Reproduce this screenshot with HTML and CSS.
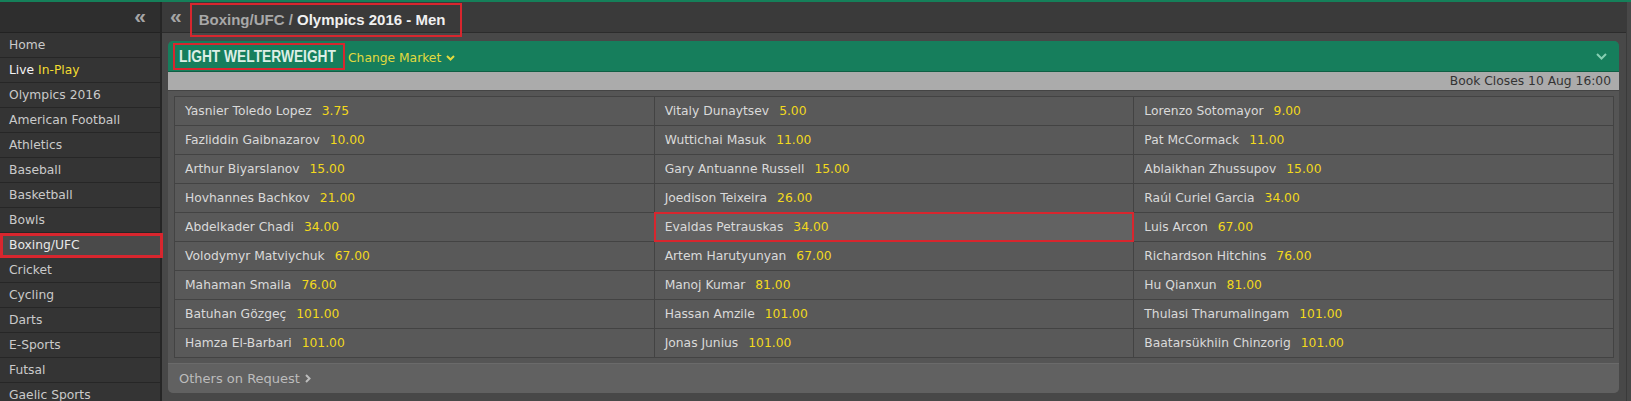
FILE: index.html
```html
<!DOCTYPE html>
<html>
<head>
<meta charset="utf-8">
<title>Boxing/UFC - Olympics 2016 - Men</title>
<link rel="stylesheet" href="styles.css">
</head>
<body>
<div id="page">
    <!-- Sports menu -->
    <div id="sidebar">
        <div class="side-head"><span class="collapse">&laquo;</span></div>
        <ul class="sports">
            <li>Home</li>
            <li class="live">Live <span>In-Play</span></li>
            <li>Olympics 2016</li>
            <li>American Football</li>
            <li>Athletics</li>
            <li>Baseball</li>
            <li>Basketball</li>
            <li>Bowls</li>
            <li class="current">Boxing/UFC</li>
            <li>Cricket</li>
            <li>Cycling</li>
            <li>Darts</li>
            <li>E-Sports</li>
            <li>Futsal</li>
            <li>Gaelic Sports</li>
        </ul>
    </div>

    <div id="main">
        <div class="crumbs">
            <span class="collapse">&laquo;</span>
            <h1 class="marked">Boxing/UFC / <b>Olympics 2016 - Men</b></h1>
        </div>

        <div class="market">
            <div class="market-head">
                <h2 class="marked"><span>LIGHT WELTERWEIGHT</span></h2>
                <span class="change">Change Market
                    <svg width="9" height="6" viewBox="0 0 9 6"><path d="M1 1l3.5 3.5L8 1" fill="none" stroke="currentColor" stroke-width="2"/></svg>
                </span>
                <svg class="toggle" width="11" height="7" viewBox="0 0 11 7"><path d="M1 1l4.5 4.5L10 1" fill="none" stroke="currentColor" stroke-width="2"/></svg>
            </div>
            <div class="closes">Book Closes 10 Aug 16:00</div>

            <div class="market-body">
                <div class="runners">
                    <div class="runner">Yasnier Toledo Lopez<span>3.75</span></div>
                    <div class="runner">Vitaly Dunaytsev<span>5.00</span></div>
                    <div class="runner">Lorenzo Sotomayor<span>9.00</span></div>
                    <div class="runner">Fazliddin Gaibnazarov<span>10.00</span></div>
                    <div class="runner">Wuttichai Masuk<span>11.00</span></div>
                    <div class="runner">Pat McCormack<span>11.00</span></div>
                    <div class="runner">Arthur Biyarslanov<span>15.00</span></div>
                    <div class="runner">Gary Antuanne Russell<span>15.00</span></div>
                    <div class="runner">Ablaikhan Zhussupov<span>15.00</span></div>
                    <div class="runner">Hovhannes Bachkov<span>21.00</span></div>
                    <div class="runner">Joedison Teixeira<span>26.00</span></div>
                    <div class="runner">Raúl Curiel Garcia<span>34.00</span></div>
                    <div class="runner">Abdelkader Chadi<span>34.00</span></div>
                    <div class="runner picked">Evaldas Petrauskas<span>34.00</span></div>
                    <div class="runner">Luis Arcon<span>67.00</span></div>
                    <div class="runner">Volodymyr Matviychuk<span>67.00</span></div>
                    <div class="runner">Artem Harutyunyan<span>67.00</span></div>
                    <div class="runner">Richardson Hitchins<span>76.00</span></div>
                    <div class="runner">Mahaman Smaila<span>76.00</span></div>
                    <div class="runner">Manoj Kumar<span>81.00</span></div>
                    <div class="runner">Hu Qianxun<span>81.00</span></div>
                    <div class="runner">Batuhan Gözgeç<span>101.00</span></div>
                    <div class="runner">Hassan Amzile<span>101.00</span></div>
                    <div class="runner">Thulasi Tharumalingam<span>101.00</span></div>
                    <div class="runner">Hamza El-Barbari<span>101.00</span></div>
                    <div class="runner">Jonas Junius<span>101.00</span></div>
                    <div class="runner">Baatarsükhiin Chinzorig<span>101.00</span></div>
                </div>
            </div>
            <div class="others">Others on Request
                <svg width="6" height="9" viewBox="0 0 6 9"><path d="M1 1l3.5 3.5L1 8" fill="none" stroke="currentColor" stroke-width="2"/></svg>
            </div>
        </div>
    </div>
</div>
</body>
</html>
```

FILE: styles.css
```css
body {
    margin: 0;
    background-color: #484848;
    font-family: "DejaVu Sans", Verdana, sans-serif;
    font-size: 12.3px;
    color: #d6d6d6;
    border-top: 2px solid #15805a;
    overflow: hidden;
}

#page {
    display: flex;
    height: 399px;
}

/* red annotation boxes */
.marked {
    border: 2px solid #d8262e;
}

/* ---------- sidebar ---------- */
#sidebar {
    width: 160px;
    flex-shrink: 0;
    background-color: #2e2e2e;
    border-right: 2px solid #262626;
}

.side-head {
    height: 30px;
    display: flex;
    justify-content: flex-end;
    align-items: center;
    padding-right: 14px;
    border-bottom: 1px solid #222;
}

.collapse {
    font-family: "Liberation Sans", Arial, sans-serif;
    font-weight: bold;
    font-size: 21px;
    color: #a5a5a5;
    line-height: 20px;
    margin-top: -3px;
}

.sports {
    list-style: none;
    margin: 0;
    padding: 0;
}

.sports li {
    height: 24px;
    line-height: 25px;
    padding-left: 9px;
    color: #cacaca;
    background-color: #343434;
    border-bottom: 1px solid #262626;
    white-space: nowrap;
}

.sports li.live {
    color: #f4f4f4;
}

.sports li.live span {
    color: #f2dc30;
}

.sports li.current {
    background-color: #4a4a4a;
    color: #e8e8e8;
    outline: 3px solid #d8262e;
    outline-offset: -3px;
    position: relative;
    width: 154px;
    margin-right: -3px;
}

/* ---------- main ---------- */
#main {
    flex: 1;
    min-width: 0;
    margin-right: 4px;
    border-right: 1px solid #3a3a3a;
}

.crumbs {
    height: 30px;
    display: flex;
    align-items: center;
    padding-left: 8px;
    background-color: #3a3a3a;
    border-bottom: 1px solid #2c2c2c;
}

.crumbs h1 {
    align-self: flex-start;
    margin: 1px 0 0 8px;
    height: 30px;
    line-height: 29px;
    padding: 0 15px 0 7px;
    font-family: "Liberation Sans", Arial, sans-serif;
    font-size: 15px;
    font-weight: bold;
    color: #a8a8a8;
}

.crumbs h1 b {
    color: #f0f0f0;
}

.market {
    margin: 8px 7px 8px 6px;
    background-color: #555;
    border-radius: 5px;
}

.market-head {
    height: 30px;
    display: flex;
    align-items: center;
    background-color: #167e5c;
    border-radius: 5px 5px 0 0;
    border-bottom: 1px solid #0f5e44;
    padding: 0 12px 0 5px;
}

.market-head h2 {
    margin: 0;
    width: 164px;
    height: 23px;
    line-height: 24px;
    padding: 0 0 0 4px;
    font-family: "Liberation Sans", Arial, sans-serif;
    font-size: 16px;
    font-weight: bold;
    color: #dcefe6;
    white-space: nowrap;
}

.market-head h2 span {
    display: inline-block;
    transform: scaleX(0.86);
    transform-origin: 0 50%;
}

.change {
    margin-left: 3px;
    margin-top: 3px;
    color: #e2da3e;
    display: flex;
    align-items: center;
    gap: 5px;
}

.toggle {
    margin-left: auto;
    color: #86cfb3;
}

.closes {
    height: 18px;
    line-height: 18px;
    text-align: right;
    padding-right: 8px;
    background-color: #ababab;
    color: #333;
    border-bottom: 1px solid #444;
}

.market-body {
    padding: 5px 5px 5px 6px;
}

.runners {
    display: grid;
    grid-template-columns: repeat(3, 1fr);
    gap: 1px;
    background-color: #434343;
    border: 1px solid #434343;
}

.runner {
    height: 28px;
    line-height: 29px;
    padding-left: 10px;
    background-color: #595959;
    color: #dadada;
    white-space: nowrap;
}

.runner span {
    margin-left: 10px;
    color: #f3d91c;
}

.runner.picked {
    background-color: #626262;
    outline: 2px solid #d8262e;
    outline-offset: -1px;
    position: relative;
}

.others {
    height: 29px;
    display: flex;
    align-items: center;
    gap: 5px;
    padding-left: 11px;
    background-color: #616161;
    border-top: 1px solid #6a6a6a;
    border-radius: 0 0 5px 5px;
    color: #bcbcbc;
    font-size: 13px;
}
```
